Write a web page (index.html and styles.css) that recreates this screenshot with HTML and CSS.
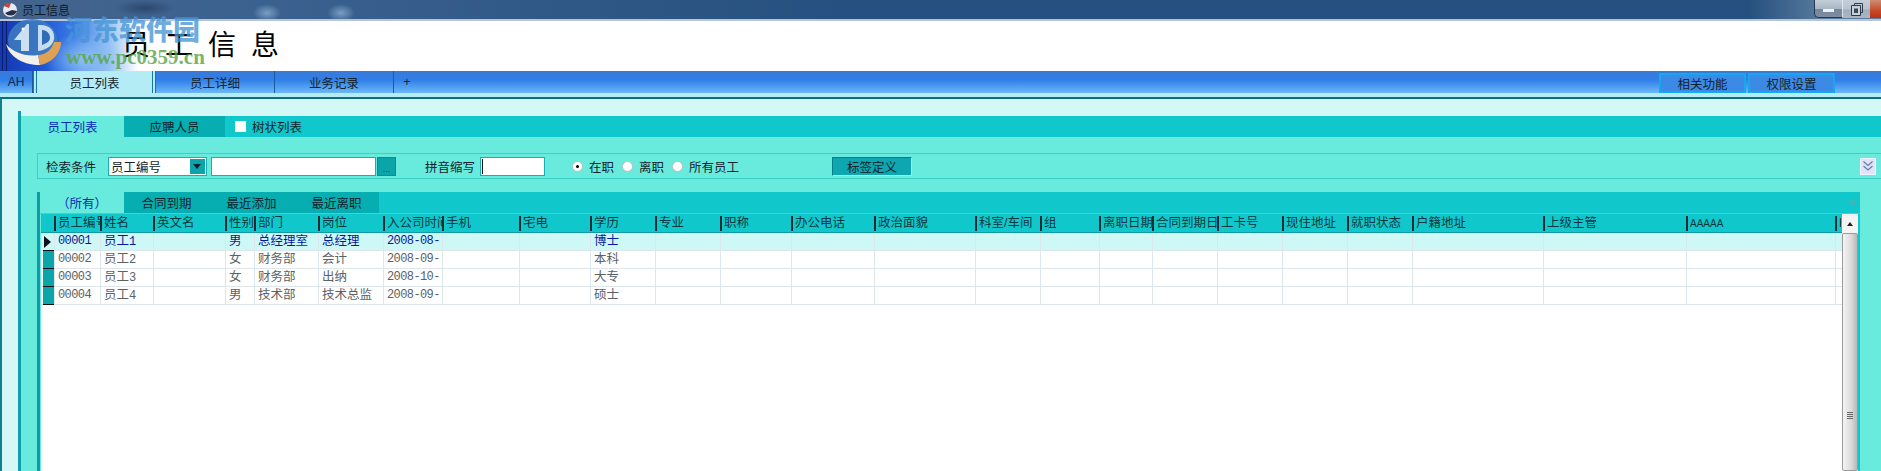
FILE: index.html
```html
<!DOCTYPE html>
<html lang="zh-CN">
<head>
  <meta charset="UTF-8">
  <title>员工信息</title>
  <link rel="stylesheet" href="styles.css">
</head>
<body>
  <div class="titlebar">
    <svg class="app-icon" width="16" height="16" viewBox="0 0 16 16">
      <circle cx="8" cy="8" r="7" fill="#e8e8ee"/>
      <path d="M2 4a7 7 0 0 1 7-3l-2 5z" fill="#c8443c"/>
      <path d="M3 11a7 7 0 0 0 12-2l-5-1z" fill="#26304c"/>
    </svg>
    <span class="title-text">员工信息</span>
    <div class="win-btns">
      <div class="win-btn btn-min"><span class="min-bar"></span></div>
      <div class="win-btn btn-max">
        <svg width="12" height="13" viewBox="0 0 12 13">
          <path d="M3.5 2.5V.5h8v9h-2" fill="none" stroke="#2c3a4c"/>
          <path d="M.5 2.5h9v10h-9z" fill="#c6d0da" stroke="#2c3a4c"/>
          <path d="M3 5.500h4v4.500h-4z" fill="#3c4a5c"/>
        </svg>
      </div>
      <div class="win-btn btn-close"></div>
    </div>
  </div>

  <div class="banner">
    <div class="banner-art"></div>
    <h1 class="page-title">员 工 信 息</h1>
    <svg class="wm-logo" width="70" height="52" viewBox="0 0 70 52">
      <ellipse cx="32.500" cy="22" rx="24.500" ry="21" fill="#3f7cc0" fill-opacity=".85"/>
      <path d="M6 26C10 40 24 47 40 47L38 37C26 39 14 35 6 26z" fill="#f2f0ea"/>
      <path d="M40 47C52 45 61 35 61 24L54 24C52 31 46 37 38 37z" fill="#dfa254"/>
      <path d="M27 6L14 22h7v11h8V6z" fill="#dcecf6" fill-opacity=".9"/>
      <path d="M38 7c12-1 17 6 16 14-1 6-7 11-16 12z" fill="#d6e8f6" fill-opacity=".9"/>
      <path d="M42 12v15c5-2 8-4 8-7 0-4-3-8-8-8z" fill="#2f6cb4"/>
      <circle cx="23" cy="11" r="1.500" fill="#fff"/>
    </svg>
    <span class="wm-cn">河东软件园</span>
    <span class="wm-url">www.pc0359.cn</span>
  </div>

  <div class="navbar">
    <div class="nav-item nav-ah">AH</div>
    <div class="nav-item nav-on">员工列表</div>
    <div class="nav-item nav-tab">员工详细</div>
    <div class="nav-item nav-tab">业务记录</div>
    <div class="nav-item nav-plus">+</div>
    <div class="nav-right">
      <div class="nav-btn">相关功能</div>
      <div class="nav-btn">权限设置</div>
    </div>
  </div>
  <div class="nav-under"></div>

  <div class="content">
    <div class="panel">
      <div class="panel-inner">
        <div class="panel-tabs">
          <div class="ptab ptab-on">员工列表</div>
          <div class="ptab ptab-off">应聘人员</div>
          <label class="tree-check"><span class="check-box"></span>树状列表</label>
        </div>
        <div class="search-row">
          <span class="search-label">检索条件</span>
          <div class="select">
            <span class="select-text">员工编号</span>
            <span class="select-arrow"></span>
          </div>
          <div class="text-input search-input"></div>
          <div class="dots-btn">...</div>
          <span class="py-label">拼音缩写</span>
          <div class="text-input py-input"><span class="caret"></span></div>
          <div class="radios">
            <span class="radio radio-on"></span><span class="radio-text">在职</span>
            <span class="radio"></span><span class="radio-text">离职</span>
            <span class="radio"></span><span class="radio-text">所有员工</span>
          </div>
          <div class="tag-btn">标签定义</div>
          <div class="expand-btn">
            <svg width="12" height="12" viewBox="0 0 12 12">
              <path d="M1.500 1.500L6 5.500l4.500-4M1.500 6L6 10l4.500-4" fill="none" stroke="#6a7a9c" stroke-width="1.200"/>
            </svg>
          </div>
        </div>

        <div class="grid-box">
          <div class="grid-tabs">
            <div class="gtab gtab-on">（所有）</div>
            <div class="gtab gtab-off">合同到期</div>
            <div class="gtab gtab-off">最近添加</div>
            <div class="gtab gtab-off">最近离职</div>
            <span class="gtab-pin"></span>
          </div>
          <div class="grid-body">
            <div class="table-wrap">
              <div class="row head">
                <div class="ind"></div>
                <div class="cell">员工编号</div><div class="cell">姓名</div><div class="cell">英文名</div>
                <div class="cell">性别</div><div class="cell">部门</div><div class="cell">岗位</div>
                <div class="cell">入公司时间</div><div class="cell">手机</div><div class="cell">宅电</div>
                <div class="cell">学历</div><div class="cell">专业</div><div class="cell">职称</div>
                <div class="cell">办公电话</div><div class="cell">政治面貌</div><div class="cell">科室/车间</div>
                <div class="cell">组</div><div class="cell">离职日期</div><div class="cell">合同到期日</div>
                <div class="cell">工卡号</div><div class="cell">现住地址</div><div class="cell">就职状态</div>
                <div class="cell">户籍地址</div><div class="cell">上级主管</div><div class="cell cell-a">AAAAA</div>
                <div class="cell">B</div>
              </div>

              <div class="row data current">
                <div class="ind ind-arrow"></div>
                <div class="cell num">00001</div><div class="cell">员工<span class="num">1</span></div><div class="cell"></div>
                <div class="cell">男</div><div class="cell">总经理室</div><div class="cell">总经理</div>
                <div class="cell num">2008-08-</div><div class="cell"></div><div class="cell"></div>
                <div class="cell">博士</div><div class="cell"></div><div class="cell"></div>
                <div class="cell"></div><div class="cell"></div><div class="cell"></div>
                <div class="cell"></div><div class="cell"></div><div class="cell"></div>
                <div class="cell"></div><div class="cell"></div><div class="cell"></div>
                <div class="cell"></div><div class="cell"></div><div class="cell"></div>
                <div class="cell"></div>
              </div>
              <div class="row data">
                <div class="ind"></div>
                <div class="cell num">00002</div><div class="cell">员工<span class="num">2</span></div><div class="cell"></div>
                <div class="cell">女</div><div class="cell">财务部</div><div class="cell">会计</div>
                <div class="cell num">2008-09-</div><div class="cell"></div><div class="cell"></div>
                <div class="cell">本科</div><div class="cell"></div><div class="cell"></div>
                <div class="cell"></div><div class="cell"></div><div class="cell"></div>
                <div class="cell"></div><div class="cell"></div><div class="cell"></div>
                <div class="cell"></div><div class="cell"></div><div class="cell"></div>
                <div class="cell"></div><div class="cell"></div><div class="cell"></div>
                <div class="cell"></div>
              </div>
              <div class="row data">
                <div class="ind"></div>
                <div class="cell num">00003</div><div class="cell">员工<span class="num">3</span></div><div class="cell"></div>
                <div class="cell">女</div><div class="cell">财务部</div><div class="cell">出纳</div>
                <div class="cell num">2008-10-</div><div class="cell"></div><div class="cell"></div>
                <div class="cell">大专</div><div class="cell"></div><div class="cell"></div>
                <div class="cell"></div><div class="cell"></div><div class="cell"></div>
                <div class="cell"></div><div class="cell"></div><div class="cell"></div>
                <div class="cell"></div><div class="cell"></div><div class="cell"></div>
                <div class="cell"></div><div class="cell"></div><div class="cell"></div>
                <div class="cell"></div>
              </div>
              <div class="row data">
                <div class="ind"></div>
                <div class="cell num">00004</div><div class="cell">员工<span class="num">4</span></div><div class="cell"></div>
                <div class="cell">男</div><div class="cell">技术部</div><div class="cell">技术总监</div>
                <div class="cell num">2008-09-</div><div class="cell"></div><div class="cell"></div>
                <div class="cell">硕士</div><div class="cell"></div><div class="cell"></div>
                <div class="cell"></div><div class="cell"></div><div class="cell"></div>
                <div class="cell"></div><div class="cell"></div><div class="cell"></div>
                <div class="cell"></div><div class="cell"></div><div class="cell"></div>
                <div class="cell"></div><div class="cell"></div><div class="cell"></div>
                <div class="cell"></div>
              </div>
            </div>
            <div class="scrollbar">
              <div class="sb-up"></div>
              <div class="sb-thumb"><span class="sb-grip"></span></div>
            </div>
          </div>
        </div>
      </div>
    </div>
  </div>
</body>
</html>
```

FILE: styles.css
```css
html, body { margin: 0; padding: 0; height: 471px; overflow: hidden; }
body { width: 1881px; font-family: "Liberation Sans", "Noto Sans CJK SC", sans-serif; font-size: 12.500px; color: #14242c; background: #68ebdd; }

/* title bar */
.titlebar { height: 19px; display: flex; align-items: center; padding-left: 2px; border-bottom: 2px solid #b6c6d6;
  background:
    radial-gradient(ellipse 14px 9px at 267px 13px, rgba(150,185,220,.7), transparent),
    radial-gradient(ellipse 14px 9px at 341px 13px, rgba(150,185,220,.7), transparent),
    radial-gradient(ellipse 30px 8px at 145px 8px, rgba(20,40,70,.45), transparent),
    linear-gradient(90deg, #44648c 0, #3c6290 12%, #26507f 45%, #26507f 93%, #5a7c9e 97%); }
.app-icon { margin-right: 2px; flex: none; }
.title-text { font-size: 12px; color: #0c1a2a; margin-left: 2px; }
.win-btns { margin-left: auto; display: flex; align-self: flex-start; height: 18px; }
.win-btn { height: 18px; display: flex; align-items: center; justify-content: center; box-sizing: border-box; }
.btn-min { width: 29px; background: linear-gradient(#c4ced8 0, #a9b7c6 50%, #78879a 55%, #7c8da2); border: 1px solid #25384e; border-top: 0; border-right: 1px solid #dce4ec; border-radius: 0 0 0 5px; }
.min-bar { width: 11px; height: 3px; background: #eef2f6; margin-top: 3px; }
.btn-max { width: 27px; background: linear-gradient(#c4ced8 0, #b7c3d0 50%, #a0aebe 55%, #aab6c6); }
.btn-close { width: 11px; background: linear-gradient(#d08c74 0, #c44a28 60%, #c02e14); }

/* banner */
.banner { position: relative; height: 50px; background: #fff; display: flex; align-items: center; }
.banner-art { width: 150px; height: 50px; flex: none; background:
    linear-gradient(90deg, transparent 0, transparent 2px, #0c1c6c 2px, #0c1c6c 3px, transparent 3px, transparent 6px, #0c1c6c 6px, #0c1c6c 7px, transparent 7px),
    radial-gradient(ellipse 40px 26px at 85px 38px, #8cc0f4, transparent),
    linear-gradient(90deg, #1438b0 0, #1c50d0 25%, #3c7ce8 50%, #a0c8f4 75%, #fff 92%); }
.page-title { margin: 0 0 0 -28px; font-family: "Liberation Serif", "Noto Sans CJK SC", serif; font-weight: 400; font-size: 28px; line-height: 50px; color: #000; white-space: pre; word-spacing: 8px; }

/* watermark sits over the banner */
.wm-logo { position: absolute; left: 0; top: -3px; }
.wm-cn { position: absolute; left: 65px; top: -12px; font-family: "Noto Sans CJK SC", sans-serif; font-weight: 900; font-size: 27px; line-height: 40px; color: rgba(70,150,215,.78); }
.wm-url { position: absolute; left: 66px; top: 25px; font-family: "Liberation Serif", serif; font-weight: 700; font-size: 21px; line-height: 22px; color: rgba(90,165,70,.82); }

/* main nav */
.navbar { height: 22px; display: flex; background: linear-gradient(#3a7ad8 0, #2f7fe8 40%, #6cb8f8 100%); }
.nav-item { display: flex; align-items: center; justify-content: center; box-sizing: border-box; }
.nav-ah { width: 33px; border-right: 1px solid #1c5aa0; font-size: 12px; color: #10284c; }
.nav-on { width: 123px; background: #b4ecf6; border-left: 4px double #16789c; border-right: 4px double #16789c; }
.nav-tab { width: 119px; border-right: 1px solid #1c5aa0; }
.nav-plus { width: 26px; }
.nav-right { margin-left: auto; margin-right: 46px; display: flex; gap: 2px; padding-top: 2px; }
.nav-btn { width: 87px; height: 20px; box-sizing: border-box; border: 2px solid #14a8ec; background: #3d8ae6; display: flex; align-items: center; justify-content: center; }
.nav-under { height: 4px; background: #b4ecf4; border-bottom: 2px solid #0f6c84; }

/* content */
.content { height: 372px; box-sizing: border-box; padding: 12px 0 0 16px; background: #d4f8f6; border-left: 2px solid #12808e; }
.panel { height: 360px; box-sizing: border-box; padding-top: 5px; border-left: 3px solid #0ea0ac; }
.panel-inner { height: 355px; background: #68ebdd; }
.panel-tabs { height: 21px; display: flex; align-items: center; background: #10c8cc; }
.ptab { height: 21px; display: flex; align-items: center; justify-content: center; box-sizing: border-box; }
.ptab-on { width: 103px; background: #68ebdd; color: #0a2ab4; }
.ptab-off { width: 101px; background: #06aeb2; color: #10262c; }
.tree-check { display: flex; align-items: center; margin-left: 10px; }
.check-box { width: 11px; height: 11px; background: #fff; margin-right: 6px; }

.search-row { height: 24px; margin: 16px 0 0 16px; display: flex; align-items: center; border-top: 1px solid #3cd0ca; border-bottom: 1px solid #3cd0ca; border-left: 1px solid #3cd0ca; }
.search-label { margin-left: 8px; width: 62px; }
.select { width: 99px; height: 19px; box-sizing: border-box; border: 1px solid #18b0b4; background: #fff; display: flex; align-items: center; justify-content: space-between; padding: 0 1px 0 2px; }
.select-arrow { width: 15px; height: 15px; background: #0ba4a8; position: relative; }
.select-arrow::after { content: ""; position: absolute; left: 3px; top: 5px; border: 4px solid transparent; border-top: 5px solid #0c2030; border-bottom: 0; }
.text-input { height: 19px; box-sizing: border-box; border: 1px solid #18b0b4; background: #fff; }
.search-input { width: 165px; margin-left: 4px; }
.dots-btn { width: 19px; height: 19px; margin-left: 1px; background: #0ba4a8; border: 1px solid #0c8c94; box-sizing: border-box; font-size: 9px; color: #10424c; display: flex; align-items: flex-end; justify-content: center; line-height: 12px; }
.py-label { margin-left: 29px; width: 55px; }
.py-input { width: 65px; position: relative; }
.caret { position: absolute; left: 1px; top: 1px; width: 1px; height: 15px; background: #111; }
.radios { margin-left: 27px; display: flex; align-items: center; }
.radio { width: 11px; height: 11px; border-radius: 50%; background: #fff; border: 1px solid #b4c0c0; box-sizing: border-box; margin-right: 6px; position: relative; }
.radio-on::after { content: ""; position: absolute; left: 3px; top: 3px; width: 3px; height: 3px; border-radius: 50%; background: #000; }
.radio-text { margin-right: 8px; }
.tag-btn { margin-left: 85px; width: 80px; height: 19px; background: #0ea6b0; border: 1px solid #a0ecec; border-left-color: #067c88; border-top-color: #067c88; box-sizing: border-box; display: flex; align-items: center; justify-content: center; }
.expand-btn { margin-left: auto; margin-right: 5px; width: 16px; height: 17px; background: #dfe4fb; border: 1px solid #f0f2ff; box-sizing: border-box; display: flex; align-items: center; justify-content: center; }

/* staff grid */
.grid-box { margin: 13px 21px 0 16px; border-left: 3px solid #0e9ca8; }
.grid-tabs { height: 22px; box-sizing: border-box; display: flex; background: #10c8cc; position: relative; border-bottom: 1px solid #3cd4d4; }
.gtab { width: 85px; display: flex; align-items: center; justify-content: center; }
.gtab-on { width: 84px; background: #68ebdd; color: #0a2ab4; }
.gtab-off { background: #06aeb2; }
.gtab-pin { position: absolute; right: 5px; top: 8px; width: 5px; height: 5px; border-radius: 50%; background: #4cb0b4; }
.grid-body { display: flex; background: #fff; height: 257px; margin-left: 1px; }
.table-wrap { flex: 1; min-width: 0; overflow: hidden; }
.row { box-sizing: border-box; display: grid; grid-template-columns: 13px 46px 53px 72px 29px 64px 65px 59px 77px 71px 65px 65px 71px 83px 101px 65px 59px 53px 65px 65px 65px 65px 131px 143px 149px 6px; }
.cell { overflow: hidden; white-space: nowrap; box-sizing: border-box; padding-left: 3px; }
.head { height: 19px; background: #10c8cc; border-bottom: 1px solid #0f9aa6; color: #0e3840; }
.head .cell { border-left: 2px solid #1c2c34; padding-left: 2px; height: 15px; line-height: 15px; margin-top: 2px; }
.head .cell-a { font-size: 10px; }
.data { height: 18px; line-height: 17px; background: #fff; color: #5a6266; border-bottom: 1px solid #dde6ea; }
.data .cell { border-left: 1px solid #dde6ea; }
.num { font-family: "Liberation Mono", monospace; font-size: 12px; letter-spacing: -.6px; }
.current { background: #cef8f6; color: #08189c; }
.ind { background: #0ba4a8; border-bottom: 1px solid #111; margin: 0 0 -1px 2px; }
.head .ind { background: #10c8cc; border-bottom: 0; margin: 0; }
.ind-arrow { background: #cef8f6; position: relative; }
.ind-arrow::after { content: ""; position: absolute; left: 1px; top: 3px; border: 6px solid transparent; border-left: 7px solid #0c1018; border-right: 0; }
.scrollbar { width: 16px; flex: none; background: #f0f0f0; display: flex; flex-direction: column; margin-right: 2px; padding-top: 2px; box-shadow: 2px 0 0 #10c8cc; }
.sb-up { height: 17px; background: #f4f4f4; position: relative; flex: none; }
.sb-up::after { content: ""; position: absolute; left: 5px; top: 6px; border: 3px solid transparent; border-bottom: 4px solid #222; border-top: 0; }
.sb-thumb { flex: 1; border: 1px solid #9a9a9a; border-radius: 2px; background: linear-gradient(90deg, #f4f4f4, #dadada 60%, #b8b8b8); display: flex; justify-content: center; }
.sb-grip { width: 6px; height: 7px; background: repeating-linear-gradient(#666 0, #666 1px, transparent 1px, transparent 2px); margin-top: 178px; }
```
